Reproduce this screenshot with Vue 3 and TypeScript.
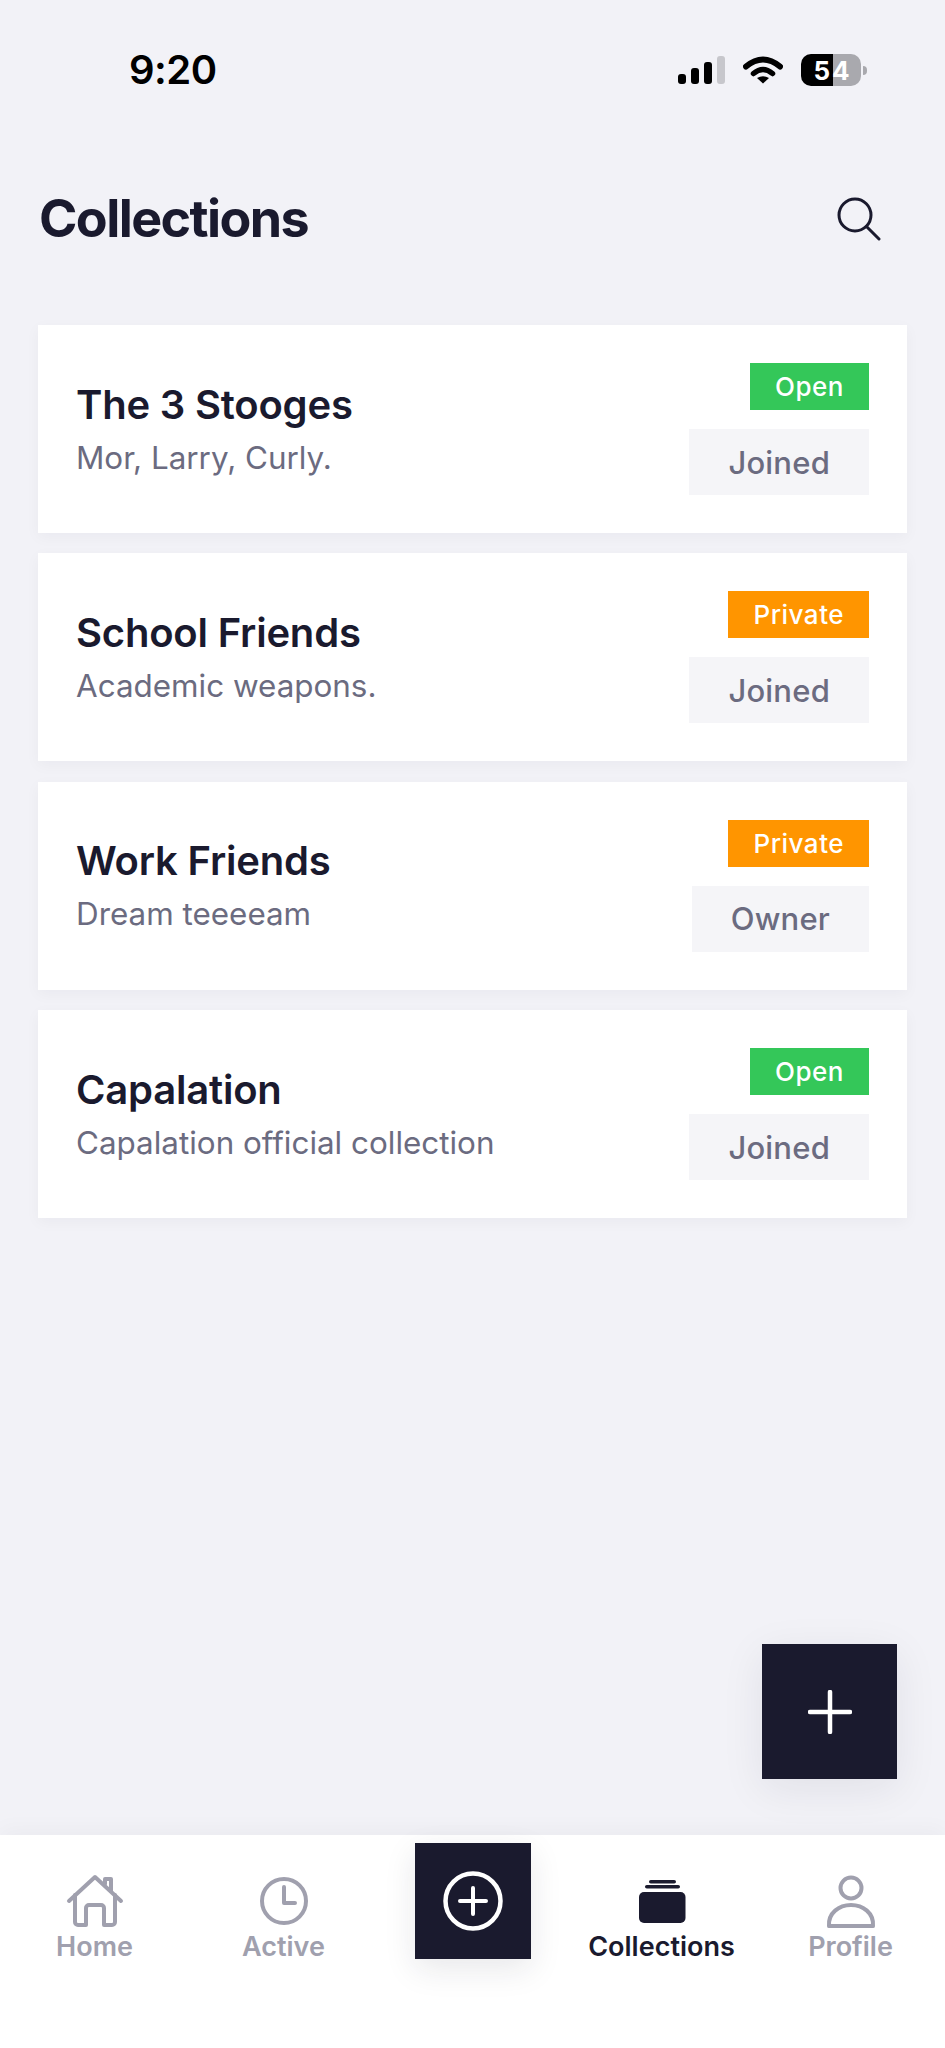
<script setup lang="ts">
interface Collection {
  name: string
  description: string
  access: 'Open' | 'Private'
  role: string
}

const collections: Collection[] = [
  { name: 'The 3 Stooges', description: 'Mor, Larry, Curly.', access: 'Open', role: 'Joined' },
  { name: 'School Friends', description: 'Academic weapons.', access: 'Private', role: 'Joined' },
  { name: 'Work Friends', description: 'Dream teeeeam', access: 'Private', role: 'Owner' },
  { name: 'Capalation', description: 'Capalation official collection', access: 'Open', role: 'Joined' },
]
</script>

<template>
  <div class="page">
    <div class="status">
      <span class="time">9:20</span>
      <div class="status-icons">
        <div class="signal">
          <i class="b1"></i><i class="b2"></i><i class="b3"></i><i class="b4"></i>
        </div>
        <svg class="wifi" width="40" height="28" viewBox="0 0 40 28" fill="none">
          <path d="M3 10.5 Q20 -3.5 37 10.5" stroke="#000" stroke-width="6" stroke-linecap="round" />
          <path d="M10.5 17.5 Q20 9.5 29.5 17.5" stroke="#000" stroke-width="5.5" stroke-linecap="round" />
          <path d="M14 22 Q20 18.5 26 22 L20 27.5 Z" fill="#000" />
        </svg>
        <div class="battery"><span>54</span></div>
        <div class="nub"></div>
      </div>
    </div>

    <header class="header">
      <h1>Collections</h1>
      <svg width="44" height="44" viewBox="0 0 44 44" fill="none">
        <circle cx="18" cy="18" r="16" stroke="#1a1a2e" stroke-width="3" />
        <path d="M29.5 29.5 L42 42" stroke="#1a1a2e" stroke-width="3" stroke-linecap="round" />
      </svg>
    </header>

    <main class="list">
      <article v-for="c in collections" :key="c.name" class="card">
        <div class="info">
          <h2>{{ c.name }}</h2>
          <p>{{ c.description }}</p>
        </div>
        <div class="side">
          <span class="badge" :class="c.access === 'Open' ? 'open' : 'private'">{{ c.access }}</span>
          <span class="role">{{ c.role }}</span>
        </div>
      </article>
    </main>

    <button class="fab" aria-label="Add">
      <svg width="44" height="44" viewBox="0 0 44 44" fill="none">
        <path d="M22 2 V42 M2 22 H42" stroke="#fff" stroke-width="4.5" stroke-linecap="round" />
      </svg>
    </button>

    <nav class="tabs">
      <div class="tab">
        <svg width="60" height="60" viewBox="0 0 60 60" fill="none" stroke="#a0a0ae" stroke-width="4" stroke-linecap="round" stroke-linejoin="round">
          <path d="M4 29 L30 5 L56 29" />
          <path d="M10 23 V50 a3 3 0 0 0 3 3 H21 V36 a3 3 0 0 1 3 -3 H36 a3 3 0 0 1 3 3 V53 H47 a3 3 0 0 0 3 -3 V23" />
          <path d="M40 12 V7 H46 V19" />
        </svg>
        <span>Home</span>
      </div>
      <div class="tab">
        <svg width="60" height="60" viewBox="0 0 60 60" fill="none" stroke="#a0a0ae" stroke-width="4" stroke-linecap="round" stroke-linejoin="round">
          <circle cx="30" cy="29" r="22" />
          <path d="M30 15 V31 H41" />
        </svg>
        <span>Active</span>
      </div>
      <div class="tab center">
        <button class="add" aria-label="Create">
          <svg width="62" height="62" viewBox="0 0 62 62" fill="none" stroke="#fff" stroke-linecap="round">
            <circle cx="31" cy="31" r="27.5" stroke-width="4.5" />
            <path d="M31 18 V44 M18 31 H44" stroke-width="4" />
          </svg>
        </button>
      </div>
      <div class="tab active">
        <svg width="60" height="60" viewBox="0 0 60 60" fill="#1a1a2e">
          <rect x="17" y="8" width="27" height="3.6" rx="1.8" />
          <rect x="13" y="13" width="35" height="3.6" rx="1.8" />
          <rect x="7" y="20" width="46.5" height="31" rx="5" />
        </svg>
        <span>Collections</span>
      </div>
      <div class="tab">
        <svg width="60" height="60" viewBox="0 0 60 60" fill="none" stroke="#a0a0ae" stroke-width="4" stroke-linecap="round" stroke-linejoin="round">
          <circle cx="30" cy="16" r="10.5" />
          <path d="M8 54 H52 C53 41 42 33 30 33 C18 33 7 41 8 54 Z" />
        </svg>
        <span>Profile</span>
      </div>
    </nav>
  </div>
</template>

<style>
html,
body {
  margin: 0;
  background: #f2f2f7;
}
</style>

<style scoped>
.page {
  position: relative;
  width: 945px;
  height: 2048px;
  display: flex;
  flex-direction: column;
  background: #f2f2f7;
  font-family: Inter, "Liberation Sans", sans-serif;
  color: #1a1a2e;
  overflow: hidden;
}
.status {
  height: 140px;
  flex: none;
  display: flex;
  justify-content: space-between;
  align-items: flex-start;
  padding: 46px 78px 0 129px;
  box-sizing: border-box;
}
.time {
  font-size: 40px;
  line-height: 48px;
  font-weight: 600;
  color: #000;
  letter-spacing: -0.5px;
}
.status-icons {
  display: flex;
  align-items: center;
  padding-top: 8px;
}
.signal {
  display: flex;
  align-items: flex-end;
  gap: 5px;
  height: 28px;
  margin-right: 18px;
}
.signal i {
  display: block;
  width: 8px;
  border-radius: 3px;
  background: #000;
}
.signal .b1 { height: 10px; }
.signal .b2 { height: 16px; }
.signal .b3 { height: 22px; }
.signal .b4 { height: 28px; background: #c7c7cc; }
.wifi {
  margin-right: 18px;
}
.battery {
  width: 60px;
  height: 32px;
  border-radius: 10px;
  background: linear-gradient(90deg, #000 0 32px, #a9a9ae 32px);
  display: flex;
  align-items: center;
  justify-content: center;
}
.battery span {
  color: #fff;
  font-size: 26px;
  font-weight: 700;
  letter-spacing: 2px;
  margin-left: 3px;
}
.nub {
  width: 4px;
  height: 9px;
  margin-left: 2px;
  background: #a9a9ae;
  border-radius: 0 4px 4px 0;
}
.header {
  flex: none;
  height: 185px;
  padding: 0 64px 0 39px;
  box-sizing: border-box;
  display: flex;
  justify-content: space-between;
  align-items: flex-start;
}
.header h1 {
  margin: 41px 0 0;
  font-size: 52px;
  line-height: 76px;
  font-weight: 700;
  letter-spacing: -1.6px;
}
.header svg {
  margin-top: 57px;
}
.list {
  padding: 0 38px;
  display: flex;
  flex-direction: column;
  gap: 20.4px;
}
.card {
  background: #fff;
  padding: 38px;
  display: flex;
  justify-content: space-between;
  align-items: center;
  box-shadow: 0 4px 14px rgba(26, 26, 46, 0.04);
}
.info h2 {
  margin: 0;
  font-size: 40px;
  line-height: 46px;
  font-weight: 600;
  letter-spacing: -0.2px;
}
.info p {
  margin: 11px 0 0;
  font-size: 31.4px;
  line-height: 38px;
  color: #6b6b80;
}
.side {
  display: flex;
  flex-direction: column;
  align-items: flex-end;
  gap: 19px;
}
.badge {
  height: 47px;
  padding: 0 25px;
  display: flex;
  align-items: center;
  color: #fff;
  font-size: 26px;
  font-weight: 500;
  letter-spacing: 0.5px;
}
.badge.open { background: #34c759; }
.badge.private { background: #ff9500; }
.role {
  height: 66px;
  padding: 0 39px;
  display: flex;
  align-items: center;
  background: #f5f5f8;
  color: #6b6b80;
  font-size: 31px;
  font-weight: 500;
  letter-spacing: 0.2px;
}
.fab {
  position: absolute;
  left: 762px;
  top: 1644px;
  width: 135px;
  height: 135px;
  border: 0;
  padding: 0;
  background: #1a1a2e;
  display: flex;
  align-items: center;
  justify-content: center;
  box-shadow: 0 10px 40px rgba(26, 26, 46, 0.08);
}
.tabs {
  margin-top: auto;
  height: 213px;
  flex: none;
  box-sizing: border-box;
  padding-top: 8px;
  background: #fff;
  display: grid;
  grid-template-columns: repeat(5, 1fr);
  box-shadow: 0 -6px 20px rgba(26, 26, 46, 0.03);
}
.tab {
  display: flex;
  flex-direction: column;
  align-items: center;
  padding-top: 29px;
  color: #a0a0ae;
  font-size: 27px;
  line-height: 32px;
  font-weight: 600;
}
.tab span {
  margin-top: -1px;
}
.tab.active {
  color: #1a1a2e;
}
.tab.center {
  padding-top: 0;
}
.add {
  width: 116px;
  height: 116px;
  border: 0;
  padding: 0;
  background: #1a1a2e;
  display: flex;
  align-items: center;
  justify-content: center;
  box-sizing: border-box;
  box-shadow: 0 10px 30px rgba(26, 26, 46, 0.1);
}
</style>
